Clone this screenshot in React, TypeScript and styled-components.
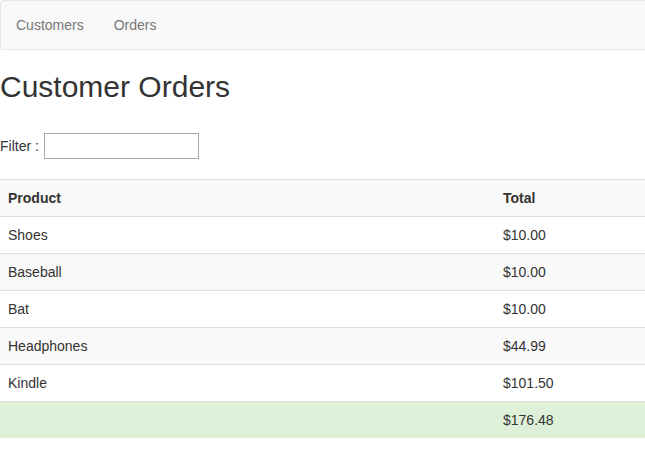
import React from "react";
import styled, { createGlobalStyle } from "styled-components";

const Global = createGlobalStyle`
  html, body { margin: 0; padding: 0; background: #fff; }
  body {
    font-family: "Liberation Sans", Arial, sans-serif;
    font-size: 14px;
    line-height: 20px;
    color: #333;
  }
`;

const Navbar = styled.nav`
  display: flex;
  height: 48px;
  background: #f8f8f8;
  border: 1px solid #e7e7e7;
  border-right: 0;
  border-radius: 4px 0 0 4px;
  margin-bottom: 20px;
`;

const NavLink = styled.a`
  display: block;
  padding: 14px 15px;
  line-height: 20px;
  color: #777;
  text-decoration: none;
`;

const Heading = styled.h2`
  margin: 0 0 30px;
  font-size: 30px;
  font-weight: 500;
  line-height: 33px;
  color: #333;
`;

const FilterRow = styled.div`
  display: flex;
  align-items: center;
  gap: 5px;
  height: 26px;
  margin-bottom: 20px;
`;

const FilterInput = styled.input`
  box-sizing: border-box;
  width: 155px;
  height: 26px;
  border: 1px solid #a9a9a9;
  padding: 2px 4px;
  font: inherit;
  margin: 0;
`;

const Table = styled.table`
  width: 100%;
  border-collapse: collapse;
  border-spacing: 0;
`;

const Row = styled.tr<{ $bg: string }>`
  background: ${(p) => p.$bg};
`;

const HeadCell = styled.th<{ $w?: string }>`
  text-align: left;
  font-weight: bold;
  padding: 8px;
  line-height: 20px;
  border-top: 1px solid #ddd;
  border-bottom: 1px solid #ddd;
  width: ${(p) => p.$w || "auto"};
`;

const Cell = styled.td`
  padding: 8px;
  line-height: 20px;
  border-top: 1px solid #ddd;
`;

const orders = [
  { product: "Shoes", total: "$10.00" },
  { product: "Baseball", total: "$10.00" },
  { product: "Bat", total: "$10.00" },
  { product: "Headphones", total: "$44.99" },
  { product: "Kindle", total: "$101.50" },
];

export default function App() {
  return (
    <>
      <Global />
      <Navbar>
        <NavLink href="#">Customers</NavLink>
        <NavLink href="#">Orders</NavLink>
      </Navbar>
      <Heading>Customer Orders</Heading>
      <FilterRow>
        <span>Filter :</span>
        <FilterInput type="text" />
      </FilterRow>
      <Table>
        <thead>
          <Row $bg="#f9f9f9">
            <HeadCell $w="479px">Product</HeadCell>
            <HeadCell>Total</HeadCell>
          </Row>
        </thead>
        <tbody>
          {orders.map((o, i) => (
            <Row key={o.product} $bg={i % 2 === 1 ? "#f9f9f9" : "#fff"}>
              <Cell>{o.product}</Cell>
              <Cell>{o.total}</Cell>
            </Row>
          ))}
          <Row $bg="#dff0d8">
            <Cell></Cell>
            <Cell>$176.48</Cell>
          </Row>
        </tbody>
      </Table>
    </>
  );
}
